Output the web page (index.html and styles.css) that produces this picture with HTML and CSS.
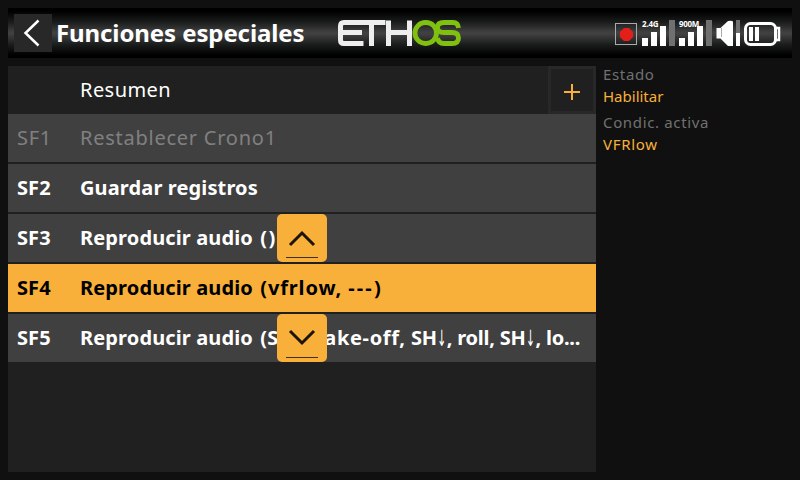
FILE: index.html
```html
<!DOCTYPE html>
<html lang="es">
<head>
<meta charset="utf-8">
<title>Funciones especiales</title>
<link rel="stylesheet" href="styles.css">
</head>
<body>
<header class="topbar">
  <button class="back" aria-label="Atrás"><svg width="38" height="38"><path d="M24.5 6.5 11.5 19l13 12.500"/></svg></button>
  <h1 class="title">Funciones especiales</h1>
  <svg class="logo" width="124" height="26" viewBox="0 0 124 26" aria-label="ETHOS">
    <g class="logo-light"><path d="M25.500 2.500H6Q2.500 2.500 2.500 6V20Q2.500 23.500 6 23.500H25.500M2.500 12.500H24"/><path d="M23 2.500H47.500M33.500 2.500V26M50.500 .5V26M71.500 .5V26M50.500 12.500H72"/></g>
    <g class="logo-green"><rect x="77" y="2.500" width="21.500" height="21" rx="10.500"/><path d="M120.500 8Q120 2.500 115 2.500H106Q99.500 2.500 99.500 7.500T106 12.500H114Q120.500 12.500 120.500 18T114 23.500H106Q100.500 23.500 99.500 18"/></g>
  </svg>
  <div class="status">
    <svg class="record" width="22" height="22"><rect x=".5" y=".5" width="21" height="21"/><path d="M9 5h5l4 4v5l-4 4H9l-4-4V9z"/></svg>
    <div class="signal"><span class="band">2.4G</span><i class="bar b1"></i><i class="bar b2"></i><i class="bar b3"></i><i class="bar b4"></i></div>
    <div class="signal"><span class="band m900">900M</span><i class="bar b1"></i><i class="bar b2"></i><i class="bar b3"></i><i class="bar b4"></i></div>
    <svg class="speaker" width="24" height="26"><path class="white" d="M0.500 8h4L12 1q5-1 5 1v24h-5L4.500 18.500h-4z"/><path class="crease" d="M5.500 8v9"/><path class="dim" d="M20 0h4v13h-4z"/><path class="white" d="M20 13h4v13h-4z"/></svg>
    <svg class="battery" width="38" height="24"><rect class="case" x="1.500" y="1.500" width="30" height="21" rx="5"/><path class="case cap" d="M32 6h3v12h-3"/><path class="cell" d="M5 5h4v14H5zM11 5h4v14h-4z"/></svg>
  </div>
</header>
<main class="content">
  <section class="list">
    <div class="summary"><span class="name">Resumen</span><button class="add" aria-label="Añadir"><svg width="16" height="16"><path d="M0 8h16M8 0v16"/></svg></button></div>
    <div class="row disabled"><span class="slot">SF1</span><span class="name">Restablecer Crono1</span></div>
    <div class="row"><span class="slot">SF2</span><span class="name">Guardar registros</span></div>
    <div class="row"><span class="slot">SF3</span><span class="name">Reproducir audio <span class="empty">()</span></span>
      <button class="move" aria-label="Subir"><svg width="50" height="48"><path class="chevron" d="M13 31 25 19l12 12"/><path class="rule" d="M9 43.500h32"/></svg></button></div>
    <div class="row selected"><span class="slot">SF4</span><span class="name">Reproducir audio <span class="args">(vfrlow, </span><span class="dashes">---)</span></span></div>
    <div class="row"><span class="slot">SF5</span><span class="name">Reproducir audio <span class="open">(</span>SH<span class="arrow">↓</span>, <span class="file">take-off,</span> <span class="tail">SH<span class="arrow">↓</span>, roll, SH<span class="arrow">↓</span>, lo...</span></span>
      <button class="move" aria-label="Bajar"><svg width="50" height="48"><path class="chevron" d="M13 17 25 29l12-12"/><path class="rule" d="M9 43.500h32"/></svg></button></div>
  </section>
  <aside class="details">
    <div class="label">Estado</div><div class="value">Habilitar</div>
    <div class="label">Condic. activa</div><div class="value wide">VFRlow</div>
  </aside>
</main>
</body>
</html>
```

FILE: styles.css
```css
* { box-sizing: border-box; }
body { margin: 0; width: 800px; height: 480px; padding: 8px; background: #101010; color: #fff; font-family: "Noto Sans", "Open Sans", sans-serif; overflow: hidden; }
button { padding: 0; border: 0; font: inherit; }
svg { display: block; fill: none; flex: none; }
.topbar { height: 50px; display: flex; align-items: center; padding-left: 6px; background: linear-gradient(#000 0, #000 3px, #1a1b1b 14px, #404040 24px, #404040 26px, #1a1b1b 37px, #000 47px); }
.back { width: 38px; height: 38px; background: #282828; }
.back path { stroke: #fff; stroke-width: 2.5; }
.title { margin: 0 0 0 4px; width: 282px; font-size: 24px; line-height: 48px; font-weight: 700; letter-spacing: -0.1px; white-space: nowrap; }
.logo-light { stroke: #eee; stroke-width: 5; }
.logo-green { stroke: #80c010; stroke-width: 4.8; }
.status { display: flex; align-items: flex-end; height: 26px; margin-left: 153px; }
.record { margin: 0 5px 1px 0; }
.record rect { stroke: #aaa; }
.record path { fill: #e41e18; }
.signal { position: relative; display: flex; align-items: flex-end; gap: 3px; height: 26px; margin-right: 4px; }
.band { position: absolute; left: 0; top: 0; font-size: 8px; line-height: 8px; font-weight: 700; letter-spacing: -0.2px; z-index: 1; }
.m900 { letter-spacing: -0.3px; }
.bar { width: 6px; background: #fff; }
.b1 { height: 8px; }
.b2 { height: 14px; }
.b3 { height: 20px; }
.b4 { height: 26px; background: #707070; }
.white, .cell { fill: #fff; }
.dim { fill: #707070; }
.crease { stroke: #aaa; }
.battery { margin-left: 4px; }
.case { stroke: #fff; stroke-width: 3; }
.cap { stroke-width: 2.5; }
.content { display: flex; margin-top: 8px; }
.list { width: 588px; height: 406px; background: #202020; }
.summary { height: 48px; display: flex; align-items: center; padding-left: 72px; font-size: 20px; line-height: 46px; }
.add { margin-left: auto; width: 48px; height: 48px; padding-top: 3px; border: 3px solid #282828; background: #202020; display: grid; place-items: center; }
.add path { stroke: #f9b03a; stroke-width: 2; }
.row { position: relative; display: flex; align-items: center; height: 48px; margin-bottom: 2px; padding-left: 9px; background: #404040; font-size: 20px; line-height: 46px; font-weight: 700; white-space: nowrap; }
.slot { width: 63px; letter-spacing: .1px; }
.name { letter-spacing: .13px; }
.summary .name { letter-spacing: .45px; }
.disabled { color: #808080; font-weight: 400; }
.disabled .name, .disabled .slot { letter-spacing: .75px; }
.selected { background: #f9b03a; color: #000; }
.empty { margin-left: 2px; letter-spacing: 1.3px; }
.args { margin-left: 2px; letter-spacing: .85px; }
.open { margin-left: 2px; letter-spacing: .1px; }
.dashes { letter-spacing: 2.2px; }
.file { letter-spacing: .65px; }
.tail { letter-spacing: -.23px; }
.arrow { display: inline-block; width: 10px; font-family: "DejaVu Sans Condensed", "DejaVu Sans", sans-serif; font-size: 12px; font-weight: 400; line-height: 16px; text-align: center; letter-spacing: 0; transform: translateY(-2px) scaleY(1.85); }
.move { position: absolute; left: 269px; top: 0; width: 50px; height: 48px; border-radius: 5px; background: #f9b03a; }
.chevron { stroke: #1b1407; stroke-width: 3; }
.rule { stroke: #403018; }
.details { padding-left: 7px; font-size: 15px; line-height: 20px; }
.label { height: 20px; color: #707070; line-height: 17px; letter-spacing: .65px; }
.value { height: 28px; color: #f9b03a; }
.value.wide { letter-spacing: .7px; }
```
